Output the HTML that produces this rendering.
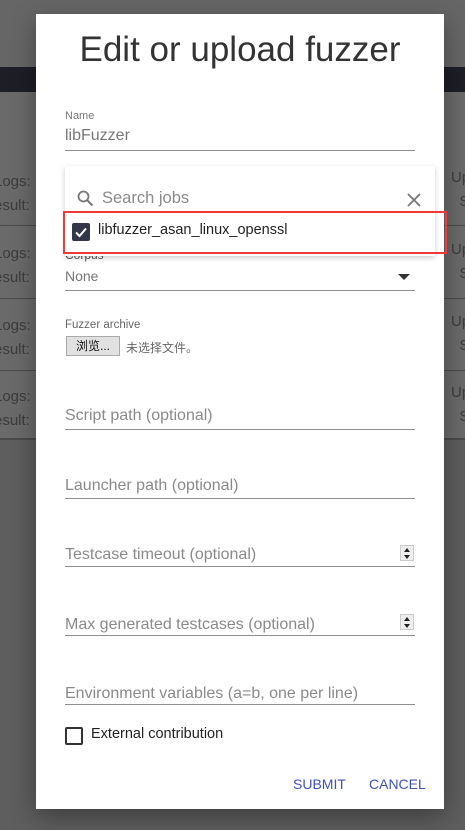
<!DOCTYPE html>
<html><head><meta charset="utf-8"><style>
*{margin:0;padding:0;box-sizing:border-box}
body{width:465px;height:830px;overflow:hidden;background:#5e5e5e;font-family:"Liberation Sans","Noto Sans CJK SC",sans-serif;position:relative}
.a{position:absolute}
.bgt{color:#3c3c3c;font-size:15px}
.lbl{color:#8a8a8a;font-size:16px}
.ln{height:1px;background:#8e8e8e}
.spin{width:14px;height:16px;border:1px solid #ccc;background:#eee}
.spin:before{content:"";position:absolute;left:3px;top:2px;border-left:3px solid transparent;border-right:3px solid transparent;border-bottom:4px solid #222}
.spin:after{content:"";position:absolute;left:3px;top:9px;border-left:3px solid transparent;border-right:3px solid transparent;border-top:4px solid #222}
</style></head><body>
<div class="a" style="left:0;top:0;width:465px;height:67px;background:#666"></div>
<div class="a" style="left:0;top:67px;width:465px;height:25px;background:#1d1e26"></div>
<div class="a" style="left:0;top:92px;width:465px;height:347px;background:#6a6a6a"></div>
<div class="a" style="left:0;top:225px;width:465px;height:1px;background:#4a4a4a"></div>
<div class="a" style="left:0;top:298px;width:465px;height:1px;background:#4a4a4a"></div>
<div class="a" style="left:0;top:370px;width:465px;height:1px;background:#4a4a4a"></div>
<div class="a" style="left:0;top:438px;width:465px;height:2px;background:#4a4a4a"></div>
<div class="a bgt" style="left:-6px;top:170px;line-height:24px">Logs:<br>esult:</div>
<div class="a bgt" style="left:-6px;top:242px;line-height:24px">Logs:<br>esult:</div>
<div class="a bgt" style="left:-6px;top:314px;line-height:24px">Logs:<br>esult:</div>
<div class="a bgt" style="left:-6px;top:385px;line-height:24px">Logs:<br>esult:</div>
<div class="a bgt" style="left:451px;top:166px;line-height:24px">Up<br>&nbsp;&nbsp;S</div>
<div class="a bgt" style="left:451px;top:238px;line-height:24px">Up<br>&nbsp;&nbsp;S</div>
<div class="a bgt" style="left:451px;top:310px;line-height:24px">Up<br>&nbsp;&nbsp;S</div>
<div class="a bgt" style="left:451px;top:381px;line-height:24px">Up<br>&nbsp;&nbsp;S</div>

<div class="a" style="left:36px;top:14px;width:408px;height:795px;background:#fff;box-shadow:0 8px 24px rgba(0,0,0,.35)"></div>
<div class="a" style="left:36px;top:30px;width:408px;text-align:center;font-size:35px;color:#333">Edit or upload fuzzer</div>

<div class="a" style="left:65px;top:110px;font-size:11px;color:#777">Name</div>
<div class="a lbl" style="left:65px;top:127px;color:#777">libFuzzer</div>
<div class="a ln" style="left:65px;top:150px;width:350px"></div>

<div class="a" style="left:65px;top:248px;font-size:12px;color:#555">Corpus</div>
<div class="a" style="left:65px;top:268px;font-size:14px;color:#777">None</div>
<div class="a" style="left:398px;top:274px;width:0;height:0;border-left:6px solid transparent;border-right:6px solid transparent;border-top:6px solid #333"></div>
<div class="a ln" style="left:65px;top:290px;width:350px"></div>

<div class="a" style="left:65px;top:166px;width:370px;height:90px;background:#fff;box-shadow:0 2px 5px rgba(0,0,0,.2)"></div>
<svg class="a" style="left:77px;top:190px" width="17" height="17" viewBox="0 0 17 17"><circle cx="6.5" cy="6.5" r="5" fill="none" stroke="#777" stroke-width="1.8"/><path d="M10.3 10.3L15.5 15.5" stroke="#777" stroke-width="2"/></svg>
<div class="a lbl" style="left:102px;top:189px;font-size:16.5px">Search jobs</div>
<svg class="a" style="left:407px;top:193px" width="14" height="14"><path d="M1 1L13 13M13 1L1 13" stroke="#777" stroke-width="1.8"/></svg>
<div class="a" style="left:72px;top:223px;width:18px;height:18px;background:#34364a;border-radius:2px"></div>
<svg class="a" style="left:72px;top:223px" width="18" height="18"><path d="M4 9.5L7.5 13L14 5.5" fill="none" stroke="#fff" stroke-width="2"/></svg>
<div class="a" style="left:98px;top:222px;font-size:14.5px;color:#222">libfuzzer_asan_linux_openssl</div>
<div class="a" style="left:63px;top:211px;width:384px;height:43px;border:2px solid #f03a3a"></div>

<div class="a" style="left:65px;top:319px;font-size:11.5px;color:#666">Fuzzer archive</div>
<div class="a" style="left:66px;top:336px;width:54px;height:20px;background:#e1e1e1;border:1px solid #aaa;font-size:12px;text-align:center;line-height:18px;color:#111">浏览...</div>
<div class="a" style="left:126px;top:339px;font-size:12px;color:#666">未选择文件。</div>

<div class="a lbl" style="left:65px;top:407px">Script path (optional)</div>
<div class="a ln" style="left:65px;top:429px;width:350px"></div>
<div class="a lbl" style="left:65px;top:477px">Launcher path (optional)</div>
<div class="a ln" style="left:65px;top:498px;width:350px"></div>
<div class="a lbl" style="left:65px;top:546px">Testcase timeout (optional)</div>
<div class="a spin" style="left:400px;top:545px"></div>
<div class="a ln" style="left:65px;top:566px;width:350px"></div>
<div class="a lbl" style="left:65px;top:616px">Max generated testcases (optional)</div>
<div class="a spin" style="left:400px;top:614px"></div>
<div class="a ln" style="left:65px;top:635px;width:350px"></div>
<div class="a lbl" style="left:65px;top:685px">Environment variables (a=b, one per line)</div>
<div class="a ln" style="left:65px;top:704px;width:350px"></div>

<div class="a" style="left:65px;top:727px;width:18px;height:18px;border:2px solid #333;border-radius:2px"></div>
<div class="a" style="left:91px;top:726px;font-size:14.5px;color:#222">External contribution</div>

<div class="a" style="left:293px;top:776px;font-size:14px;color:#3f51b5">SUBMIT</div>
<div class="a" style="left:369px;top:776px;font-size:14px;color:#3f51b5">CANCEL</div>
</body></html>
